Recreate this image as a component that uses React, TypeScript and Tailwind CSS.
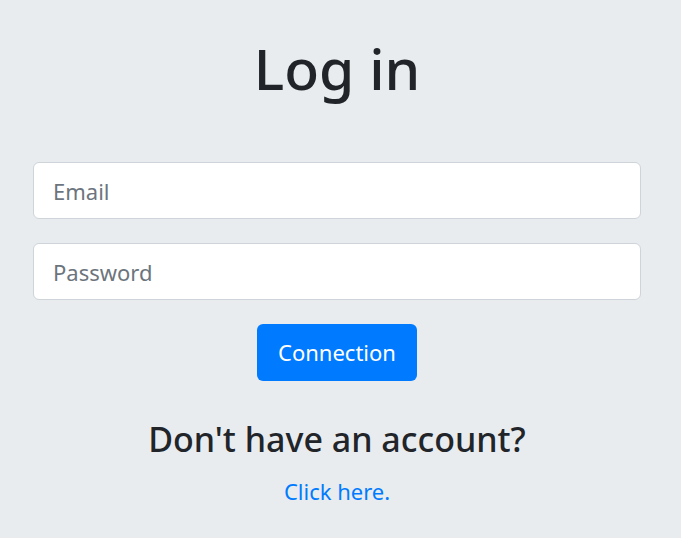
export default function App() {
  return (
    <div
      className="min-h-[538px] w-full bg-[#e9ecef] pl-[33px] pr-[40px] text-[#212529]"
      style={{ fontFamily: '"Noto Sans", "Open Sans", sans-serif' }}
    >
      <h1 className="pt-[34px] text-center text-[57px] font-medium leading-[1.2]">Log in</h1>

      <form className="mt-[60px] flex flex-col items-center" onSubmit={(e) => e.preventDefault()}>
        <input
          type="email"
          placeholder="Email"
          className="h-[57px] w-full rounded-[6px] border border-[#ced4da] bg-white px-[19px] text-[22px] text-[#495057] placeholder:text-[#6c757d] outline-none"
        />
        <input
          type="password"
          placeholder="Password"
          className="mt-[24px] h-[57px] w-full rounded-[6px] border border-[#ced4da] bg-white px-[19px] text-[22px] text-[#495057] placeholder:text-[#6c757d] outline-none"
        />
        <button
          type="submit"
          className="mt-[24px] h-[57px] w-[160px] rounded-[6px] bg-[#007bff] text-[22px] text-white"
        >
          Connection
        </button>
      </form>

      <h2 className="mt-[38px] text-center text-[34px] font-medium leading-[1.2]">Don't have an account?</h2>
      <p className="mt-[15px] text-center text-[22px]">
        <a href="#" className="text-[#007bff]">Click here.</a>
      </p>
    </div>
  )
}
